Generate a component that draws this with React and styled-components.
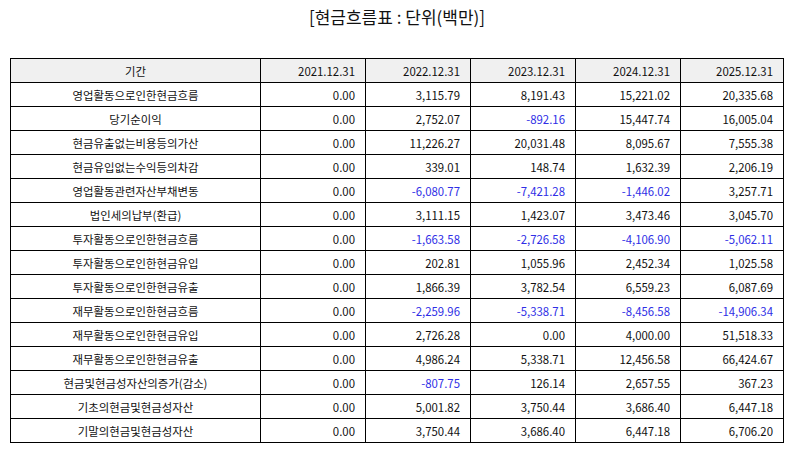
import React from 'react';
import styled, { createGlobalStyle } from 'styled-components';

const GlobalStyle = createGlobalStyle`
  body {
    margin: 0;
    background: #ffffff;
    font-family: "Noto Sans CJK KR", "Noto Sans", sans-serif;
    color: #111111;
  }
`;

const Page = styled.div`
  padding: 0 10px;
`;

const Title = styled.h2`
  margin: 0;
  height: 58px;
  padding-top: 5px;
  box-sizing: border-box;
  text-align: center;
  font-size: 17px;
  font-weight: 400;
  line-height: 24px;
  color: #111;
`;

const Table = styled.table`
  width: 774px;
  border-collapse: separate;
  border-spacing: 0;
  table-layout: fixed;
  font-size: 11.4px;
  border-left: 1px solid #000;
  border-top: 1px solid #000;

  & th, & td {
    box-sizing: border-box;
    border-right: 1px solid #000;
    border-bottom: 1px solid #000;
    height: 24px;
    padding: 0 10px 0 0;
    white-space: nowrap;
  }
`;

const Col = styled.col`
  width: ${(p) => p.$w}px;
`;

const HeadCell = styled.th`
  background: #f0f0f0;
  font-weight: 400;
  text-align: ${(p) => (p.$center ? 'center' : 'right')};

  && {
    padding-right: ${(p) => (p.$center ? 0 : 10)}px;
  }
`;

const LabelCell = styled.td`
  text-align: center;

  && {
    padding: 0;
  }
`;

const NumCell = styled.td`
  text-align: right;
  color: ${(p) => (p.$neg ? '#2f2fe6' : '#111')};
`;

const widths = [250, 105, 105, 105, 105, 103];

const years = ['2021.12.31', '2022.12.31', '2023.12.31', '2024.12.31', '2025.12.31'];

const rows = [
  ['영업활동으로인한현금흐름', '0.00', '3,115.79', '8,191.43', '15,221.02', '20,335.68'],
  ['당기순이익', '0.00', '2,752.07', '-892.16', '15,447.74', '16,005.04'],
  ['현금유출없는비용등의가산', '0.00', '11,226.27', '20,031.48', '8,095.67', '7,555.38'],
  ['현금유입없는수익등의차감', '0.00', '339.01', '148.74', '1,632.39', '2,206.19'],
  ['영업활동관련자산부채변동', '0.00', '-6,080.77', '-7,421.28', '-1,446.02', '3,257.71'],
  ['법인세의납부(환급)', '0.00', '3,111.15', '1,423.07', '3,473.46', '3,045.70'],
  ['투자활동으로인한현금흐름', '0.00', '-1,663.58', '-2,726.58', '-4,106.90', '-5,062.11'],
  ['투자활동으로인한현금유입', '0.00', '202.81', '1,055.96', '2,452.34', '1,025.58'],
  ['투자활동으로인한현금유출', '0.00', '1,866.39', '3,782.54', '6,559.23', '6,087.69'],
  ['재무활동으로인한현금흐름', '0.00', '-2,259.96', '-5,338.71', '-8,456.58', '-14,906.34'],
  ['재무활동으로인한현금유입', '0.00', '2,726.28', '0.00', '4,000.00', '51,518.33'],
  ['재무활동으로인한현금유출', '0.00', '4,986.24', '5,338.71', '12,456.58', '66,424.67'],
  ['현금및현금성자산의증가(감소)', '0.00', '-807.75', '126.14', '2,657.55', '367.23'],
  ['기초의현금및현금성자산', '0.00', '5,001.82', '3,750.44', '3,686.40', '6,447.18'],
  ['기말의현금및현금성자산', '0.00', '3,750.44', '3,686.40', '6,447.18', '6,706.20'],
];

function App() {
  return (
    <Page>
      <GlobalStyle />
      <Title>[현금흐름표 : 단위(백만)]</Title>
      <Table>
        <colgroup>
          {widths.map((w, i) => (
            <Col key={i} $w={w} />
          ))}
        </colgroup>
        <thead>
          <tr>
            <HeadCell $center>기간</HeadCell>
            {years.map((y) => (
              <HeadCell key={y}>{y}</HeadCell>
            ))}
          </tr>
        </thead>
        <tbody>
          {rows.map(([label, ...values]) => (
            <tr key={label}>
              <LabelCell>{label}</LabelCell>
              {values.map((v, i) => (
                <NumCell key={i} $neg={v.startsWith('-')}>{v}</NumCell>
              ))}
            </tr>
          ))}
        </tbody>
      </Table>
    </Page>
  );
}

export default App;
